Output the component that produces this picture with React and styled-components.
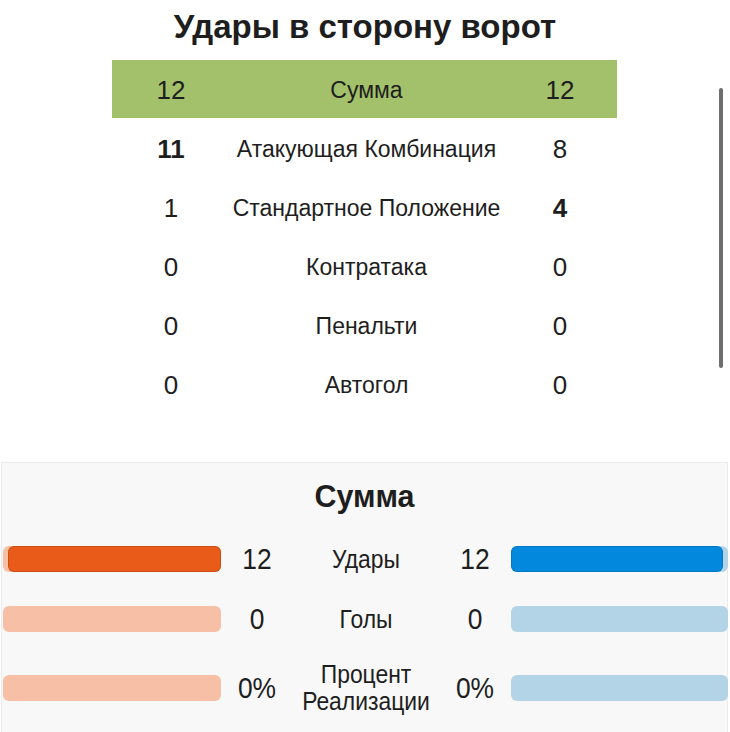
import React from "react";
import styled, { createGlobalStyle } from "styled-components";

const Global = createGlobalStyle`
  html, body { margin: 0; padding: 0; background: #fff; }
  body { font-family: "Liberation Sans", Arial, sans-serif; color: #1e1e1e; }
`;

const Page = styled.div`
  position: relative;
  width: 730px;
  height: 732px;
  overflow: hidden;
  background: #fff;
`;

const Title = styled.h1`
  margin: 0;
  height: 60px;
  padding-bottom: 6px;
  box-sizing: border-box;
  display: flex;
  align-items: center;
  justify-content: center;
  font-size: 33px;
  font-weight: 700;
  color: #1e1e1e;
`;

const Table = styled.div`
  width: 505px;
  margin: 0 0 0 112px;
  display: flex;
  flex-direction: column;
`;

const Row = styled.div`
  display: grid;
  grid-template-columns: 118px 1fr 114px;
  align-items: center;
  height: ${(p) => (p.$highlight ? 58 : 59)}px;
  background: ${(p) => (p.$highlight ? "#a3c06a" : "transparent")};
  padding-top: ${(p) => (p.$highlight ? 2 : 4)}px;
  box-sizing: border-box;
`;

const Num = styled.div`
  text-align: center;
  font-size: 26px;
  font-weight: ${(p) => (p.$bold ? 700 : 400)};
  color: #1e1e1e;
`;

const Label = styled.div`
  text-align: center;
  font-size: 23px;
  color: #1e1e1e;
`;

const ScrollThumb = styled.div`
  position: absolute;
  left: 719px;
  top: 88px;
  width: 4px;
  height: 280px;
  border-radius: 2px;
  background: #6e6e6e;
`;

const Panel = styled.section`
  margin: 49px 2px 0 1px;
  background: #f8f8f8;
  border: 1px solid #ececec;
  border-bottom: none;
  height: 280px;
`;

const PanelTitle = styled.h2`
  margin: 0;
  height: 66px;
  display: flex;
  align-items: center;
  justify-content: center;
  font-size: 32px;
  font-weight: 700;
  color: #1e1e1e;
  transform: scaleX(0.95);
`;

const BarRow = styled.div`
  display: grid;
  grid-template-columns: 218px 72px 146px 72px 217px;
  align-items: center;
  min-height: 60px;
  padding: 12px 0;
  box-sizing: border-box;
  margin-left: 1px;
`;

const Track = styled.div`
  position: relative;
  height: 26px;
  border-radius: 6px;
  background: ${(p) => p.$track};
`;

const Fill = styled.div`
  position: absolute;
  top: 0;
  bottom: 0;
  ${(p) => (p.$side === "left" ? "right: 0;" : "left: 0;")}
  border-radius: 6px;
  background: ${(p) => p.$color};
  box-shadow: inset 0 0 0 1px rgba(0, 0, 0, 0.12);
`;

const BarNum = styled.div`
  text-align: center;
  font-size: 30px;
  color: #1e1e1e;
  transform: scaleX(0.88);
`;

const BarLabel = styled.div`
  text-align: center;
  font-size: 26px;
  line-height: 27px;
  color: #1e1e1e;
  white-space: nowrap;
  transform: scaleX(0.88);
`;

const rows = [
  { l: "11", label: "Атакующая Комбинация", r: "8", lb: true },
  { l: "1", label: "Стандартное Положение", r: "4", rb: true },
  { l: "0", label: "Контратака", r: "0" },
  { l: "0", label: "Пенальти", r: "0" },
  { l: "0", label: "Автогол", r: "0" },
];

const bars = [
  { l: "12", r: "12", label: "Удары", lp: 97.7, rp: 97.7 },
  { l: "0", r: "0", label: "Голы", lp: 0, rp: 0 },
  { l: "0%", r: "0%", label: <>Процент<br />Реализации</>, lp: 0, rp: 0 },
];

export default function App() {
  return (
    <Page>
      <Global />
      <Title>Удары в сторону ворот</Title>
      <Table>
        <Row $highlight>
          <Num>12</Num>
          <Label>Сумма</Label>
          <Num>12</Num>
        </Row>
        {rows.map((r, i) => (
          <Row key={i}>
            <Num $bold={r.lb}>{r.l}</Num>
            <Label>{r.label}</Label>
            <Num $bold={r.rb}>{r.r}</Num>
          </Row>
        ))}
      </Table>
      <ScrollThumb />
      <Panel>
        <PanelTitle>Сумма</PanelTitle>
        {bars.map((b, i) => (
          <BarRow key={i}>
            <Track $track="#f7bfa5">
              {b.lp > 0 && <Fill $side="left" $color="#e85b18" style={{ width: `${b.lp}%` }} />}
            </Track>
            <BarNum>{b.l}</BarNum>
            <BarLabel>{b.label}</BarLabel>
            <BarNum>{b.r}</BarNum>
            <Track $track="#b3d4e7">
              {b.rp > 0 && <Fill $side="right" $color="#0289de" style={{ width: `${b.rp}%` }} />}
            </Track>
          </BarRow>
        ))}
      </Panel>
    </Page>
  );
}
